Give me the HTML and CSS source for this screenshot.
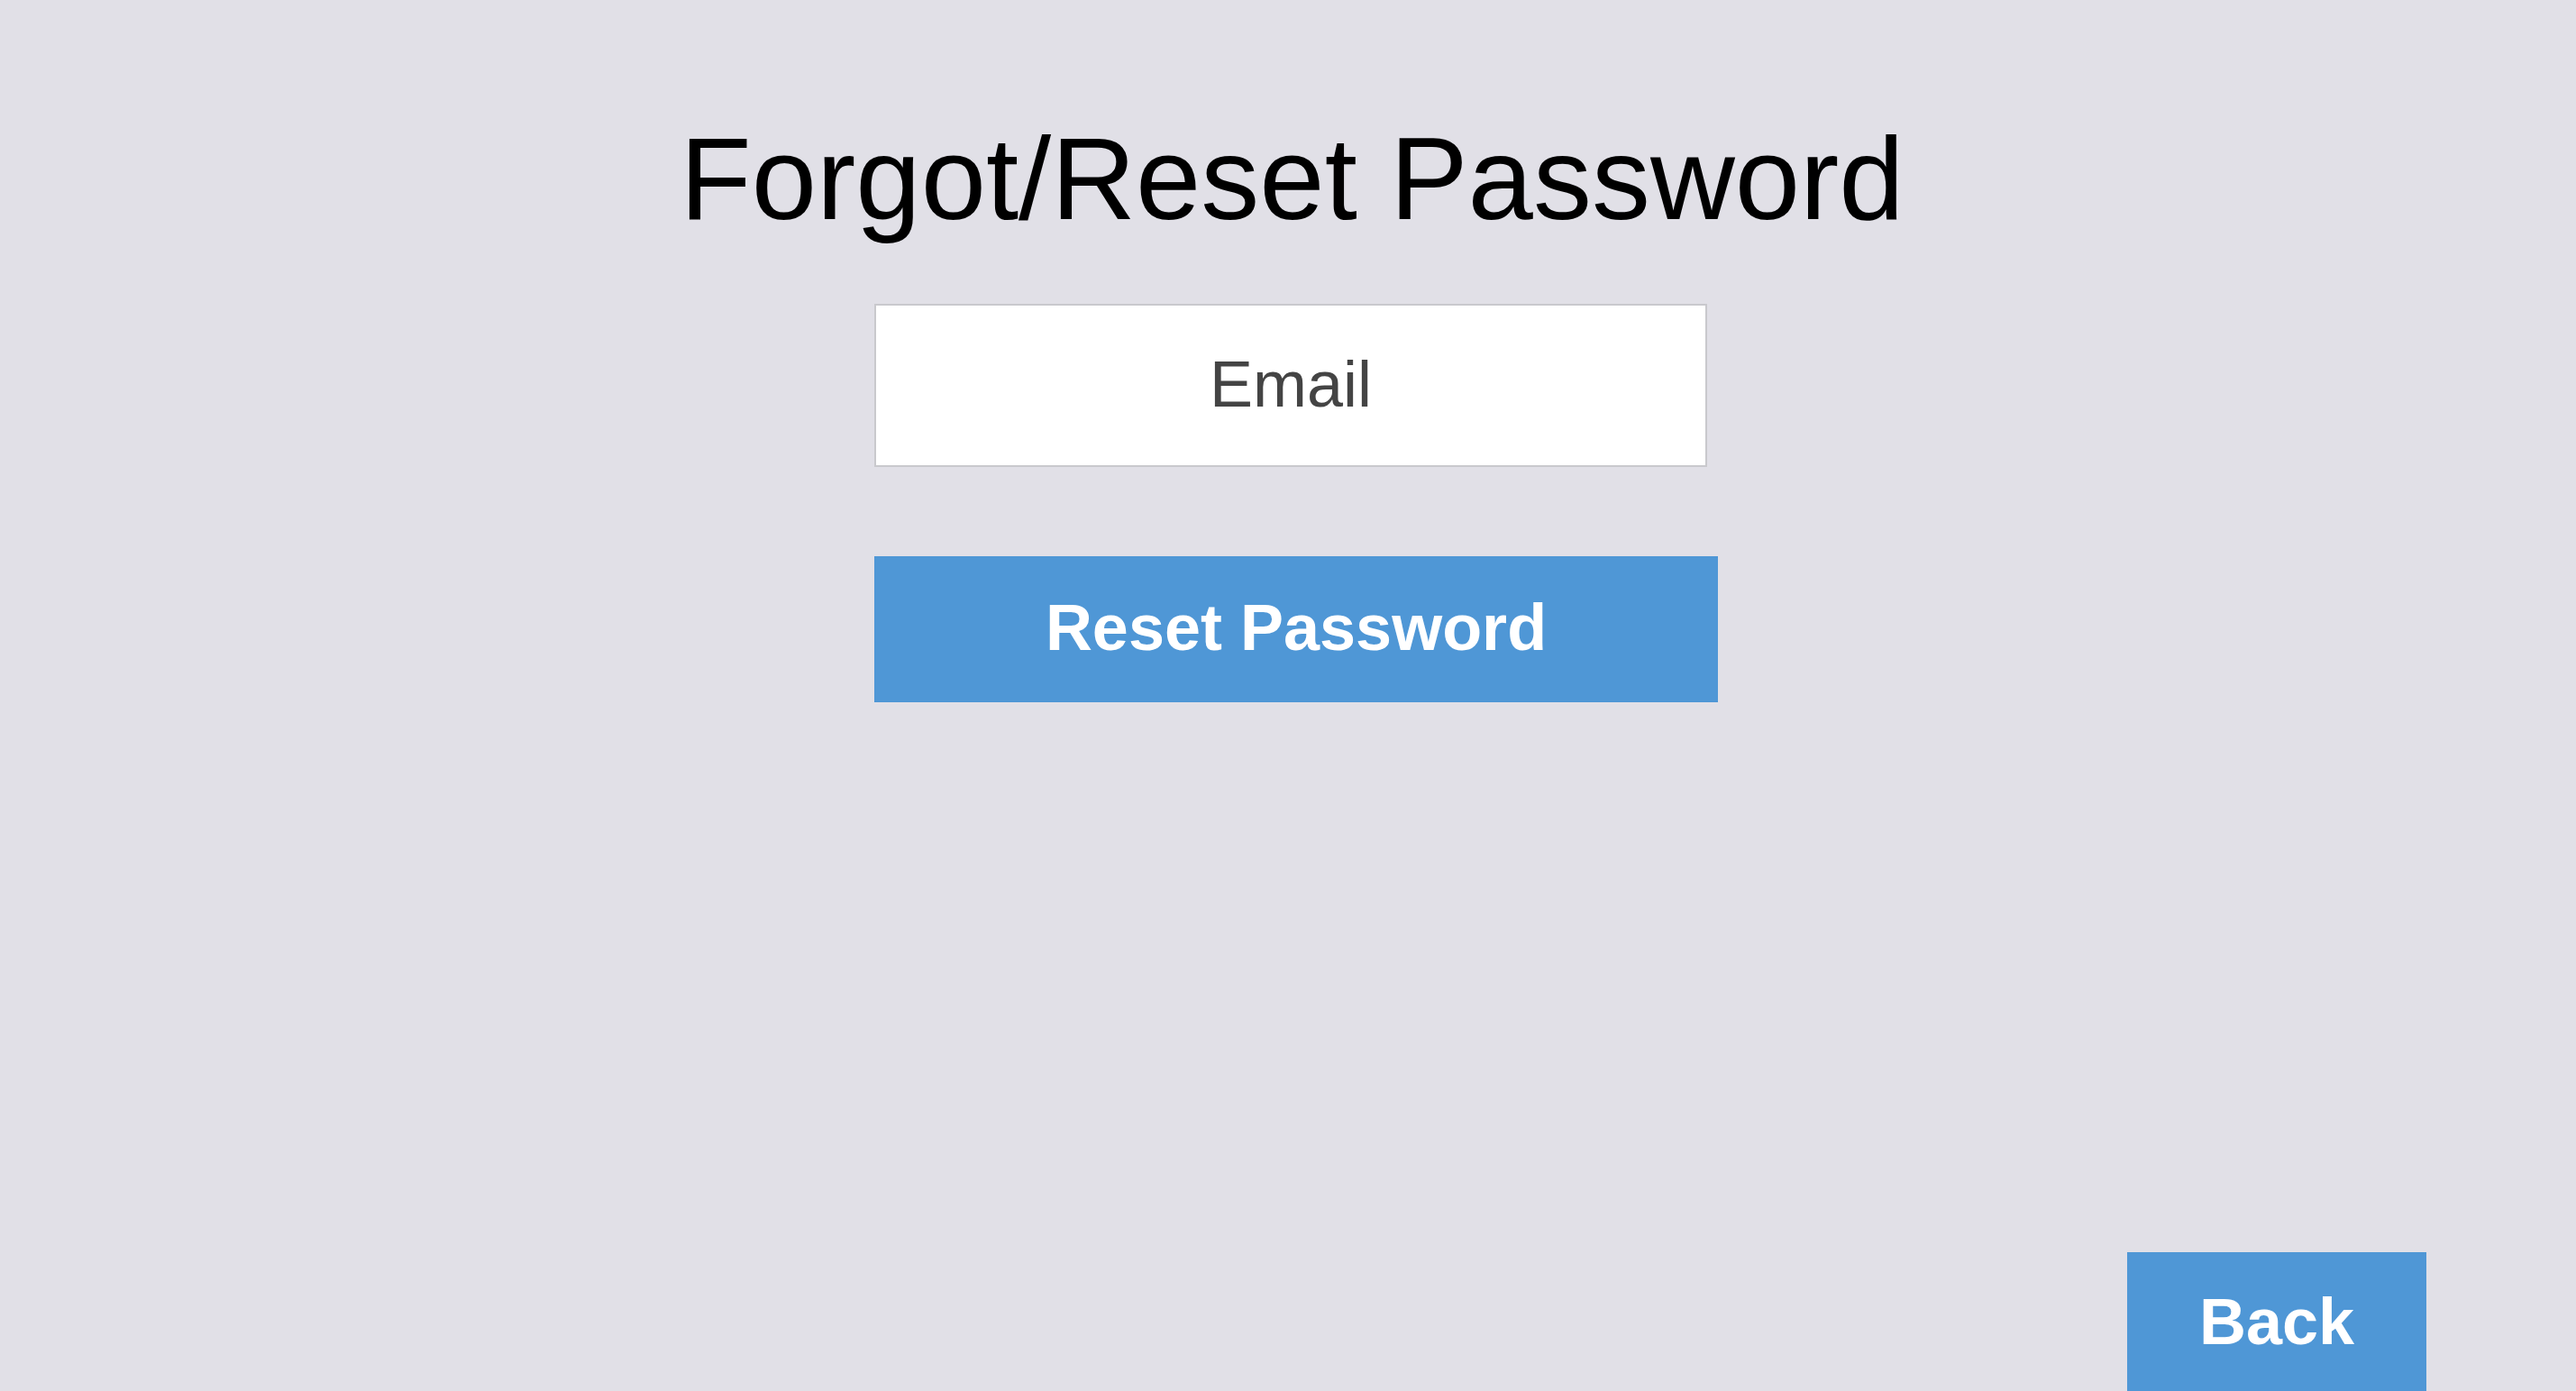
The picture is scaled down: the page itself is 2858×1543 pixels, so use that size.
FILE: index.html
```html
<!DOCTYPE html>
<html lang="en">
<head>
<meta charset="utf-8">
<title>Forgot/Reset Password</title>
<link rel="stylesheet" href="styles.css">
</head>
<body>
<main class="page">
  <h1 class="title">Forgot/Reset Password</h1>
  <form class="form">
    <input class="email" type="email" placeholder="Email">
    <button class="btn btn-reset" type="button">Reset Password</button>
  </form>
  <div class="footer">
    <button class="btn btn-back" type="button">Back</button>
  </div>
</main>
</body>
</html>
```
FILE: styles.css
```css
html, body {
  margin: 0;
  padding: 0;
  height: 100%;
  overflow: hidden;
}
body {
  background: #e1e0e7;
  font-family: "Liberation Sans", Arial, sans-serif;
}
.page {
  display: flex;
  flex-direction: column;
  padding-top: 123px;
}
.title {
  margin: 0;
  padding-left: 9px;
  font-size: 130px;
  line-height: 150px;
  font-weight: 400;
  color: #000;
  text-align: center;
}
.form {
  display: flex;
  flex-direction: column;
  align-items: flex-start;
  width: 936px;
  margin-left: calc(50% - 459px);
  margin-top: 64px;
}
.email {
  box-sizing: border-box;
  width: 924px;
  height: 181px;
  border: 2px solid #c9c9cd;
  background: #fff;
  font-family: "Liberation Sans", Arial, sans-serif;
  font-size: 72px;
  color: #444;
  text-align: center;
  padding: 0 0 3px;
  outline: none;
}
.email::placeholder {
  color: #444;
  opacity: 1;
}
.btn {
  box-sizing: border-box;
  border: 0;
  background: #4f97d6;
  color: #fff;
  font-family: "Liberation Sans", Arial, sans-serif;
  font-weight: 700;
  font-size: 72px;
  height: 162px;
  padding: 0;
  cursor: pointer;
}
.btn-reset {
  width: 936px;
  margin-top: 99px;
  padding-bottom: 4px;
}
.footer {
  display: flex;
  justify-content: flex-end;
  padding-right: 166px;
  margin-top: 610px;
}
.btn-back {
  width: 332px;
  padding-bottom: 8px;
}
```
